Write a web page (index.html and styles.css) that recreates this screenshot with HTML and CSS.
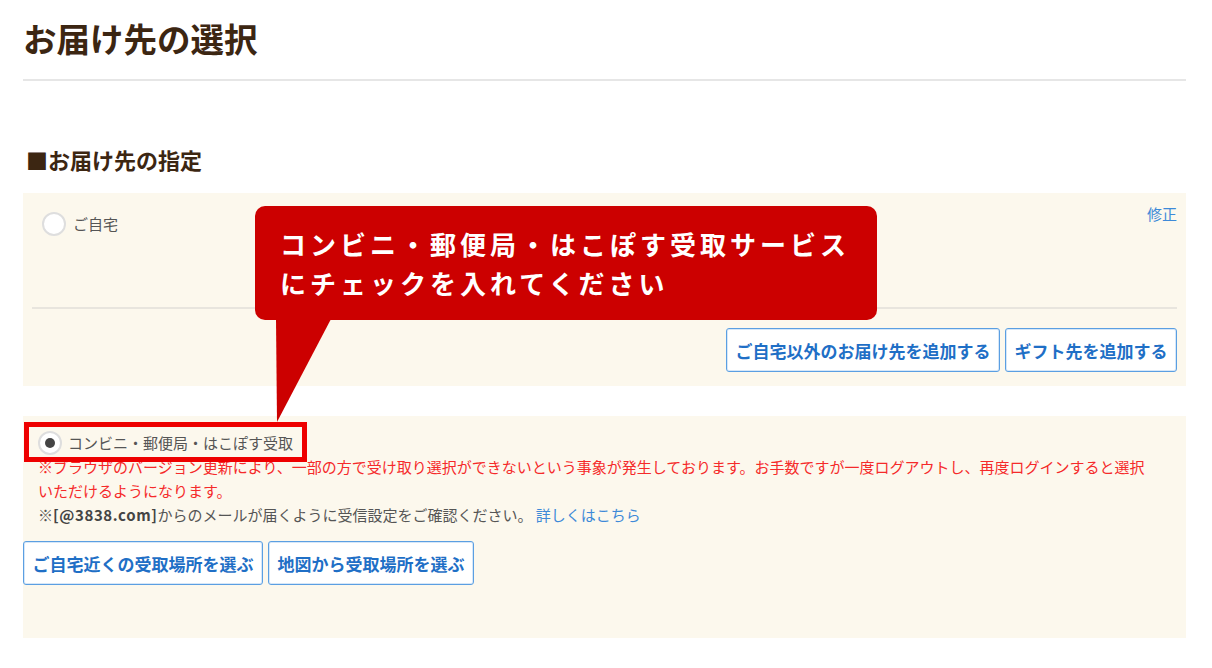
FILE: index.html
```html
<!DOCTYPE html>
<html lang="ja">
<head>
    <meta charset="UTF-8">
    <meta name="viewport" content="width=device-width, initial-scale=1.0">
    <title>お届け先の選択</title>
    <link rel="stylesheet" href="styles.css">
</head>
<body>
    <div class="page">
        <h1 class="page-title">お届け先の選択</h1>

        <h2 class="section-title">■お届け先の指定</h2>

        <div class="dest-box home-box">
            <div class="home-top">
                <label class="radio-row">
                    <span class="radio"></span>
                    <span class="radio-label">ご自宅</span>
                </label>
                <a class="edit-link" href="#">修正</a>
            </div>
            <div class="divider"></div>
            <div class="btn-row right">
                <button class="btn">ご自宅以外のお届け先を追加する</button>
                <button class="btn">ギフト先を追加する</button>
            </div>
        </div>

        <div class="dest-box pickup-box">
            <label class="radio-row pickup-radio">
                <span class="radio checked"></span>
                <span class="radio-label">コンビニ・郵便局・はこぽす受取</span>
            </label>
            <div class="notes">
                <p class="note-warn">※ブラウザのバージョン更新により、一部の方で受け取り選択ができないという事象が発生しております。お手数ですが一度ログアウトし、再度ログインすると選択<br>いただけるようになります。</p>
                <p class="note">※<b>[@3838.com]</b>からのメールが届くように受信設定をご確認ください。 <a href="#">詳しくはこちら</a></p>
            </div>
            <div class="btn-row">
                <button class="btn">ご自宅近くの受取場所を選ぶ</button>
                <button class="btn">地図から受取場所を選ぶ</button>
            </div>
            <!-- 注釈: 赤枠 -->
            <div class="highlight"></div>
        </div>

        <!-- 注釈: 吹き出し -->
        <div class="callout">コンビニ・郵便局・はこぽす受取サービス<br>にチェックを入れてください</div>
        <svg class="callout-tail" width="56" height="104" viewBox="0 0 56 104">
            <polygon points="0,0 55,0 1,103" fill="#cc0000"/>
        </svg>
    </div>
</body>
</html>
```

FILE: styles.css
```css
body {
    font-family: "Noto Sans CJK JP", "Noto Sans", sans-serif;
    margin: 0;
    background-color: #fff;
    color: #555;
}

.page {
    position: relative;
    width: 1163px;
    margin-left: 23px;
}

.page-title {
    margin: 0;
    padding: 16px 0 19px 0;
    font-size: 33.5px;
    line-height: 44px;
    font-weight: bold;
    color: #3c2612;
    border-bottom: 2px solid #e6e6e6;
}

.section-title {
    margin: 63px 0 19px 3px;
    font-size: 22px;
    line-height: 30px;
    font-weight: bold;
    color: #3c2612;
}

.dest-box {
    background-color: #fcf8ed;
}

.home-box {
    padding: 0 9px 14px;
}

.home-top {
    display: flex;
    justify-content: space-between;
    align-items: flex-start;
    height: 114px;
    padding-top: 11px;
    box-sizing: border-box;
}

.radio-row {
    display: flex;
    align-items: center;
    gap: 7px;
    height: 24px;
    font-size: 15px;
}

.home-top .radio-row {
    margin: 8px 0 0 10px;
}

.radio {
    width: 24px;
    height: 24px;
    box-sizing: border-box;
    border: 2px solid #dedede;
    border-radius: 50%;
    background: #fff;
    display: flex;
    align-items: center;
    justify-content: center;
}

.radio.checked::after {
    content: "";
    width: 10px;
    height: 10px;
    border-radius: 50%;
    background: #444;
}

.radio-label {
    color: #555;
    line-height: 20px;
}

.edit-link {
    font-size: 15px;
    line-height: 20px;
    color: #3e8ad8;
    text-decoration: none;
}

.divider {
    border-top: 2px solid #e8e5de;
}

.btn-row {
    display: flex;
    gap: 5px;
}

.btn-row.right {
    justify-content: flex-end;
    margin-top: 19px;
}

.btn {
    height: 44px;
    padding: 0 8.5px;
    font-family: inherit;
    font-size: 17px;
    font-weight: bold;
    color: #1f6fc6;
    background: #fff;
    border: 1px solid #5b9fe2;
    border-radius: 3px;
    box-shadow: inset 0 0 0 1px #d6e7f8;
    cursor: pointer;
}

.pickup-box {
    position: relative;
    margin-top: 30px;
    padding-bottom: 53px;
}

.pickup-radio {
    margin-left: 15px;
    padding-top: 15px;
    gap: 6px;
    height: auto;
}

.notes {
    padding-left: 15px;
    font-size: 15px;
    line-height: 24px;
}

.notes p {
    margin: 0;
}

.note-warn {
    color: #f52a2a;
}

.note {
    color: #555;
}

.note b {
    color: #444;
    letter-spacing: 0.6px;
}

.note a {
    color: #3e8ad8;
    text-decoration: none;
}

.pickup-box .btn-row {
    margin-top: 14px;
}

.highlight {
    position: absolute;
    left: 1px;
    top: 6px;
    width: 283px;
    height: 40px;
    box-sizing: border-box;
    border: 5px solid #ee0000;
}

.callout {
    position: absolute;
    left: 232px;
    top: 206px;
    width: 622px;
    height: 114px;
    box-sizing: border-box;
    padding: 18px 0 0 25px;
    background: #cc0000;
    border-radius: 10px;
    color: #fff;
    font-size: 26px;
    line-height: 39px;
    font-weight: bold;
    letter-spacing: 4px;
    white-space: nowrap;
}

.callout-tail {
    position: absolute;
    left: 253px;
    top: 319px;
    display: block;
}
```
